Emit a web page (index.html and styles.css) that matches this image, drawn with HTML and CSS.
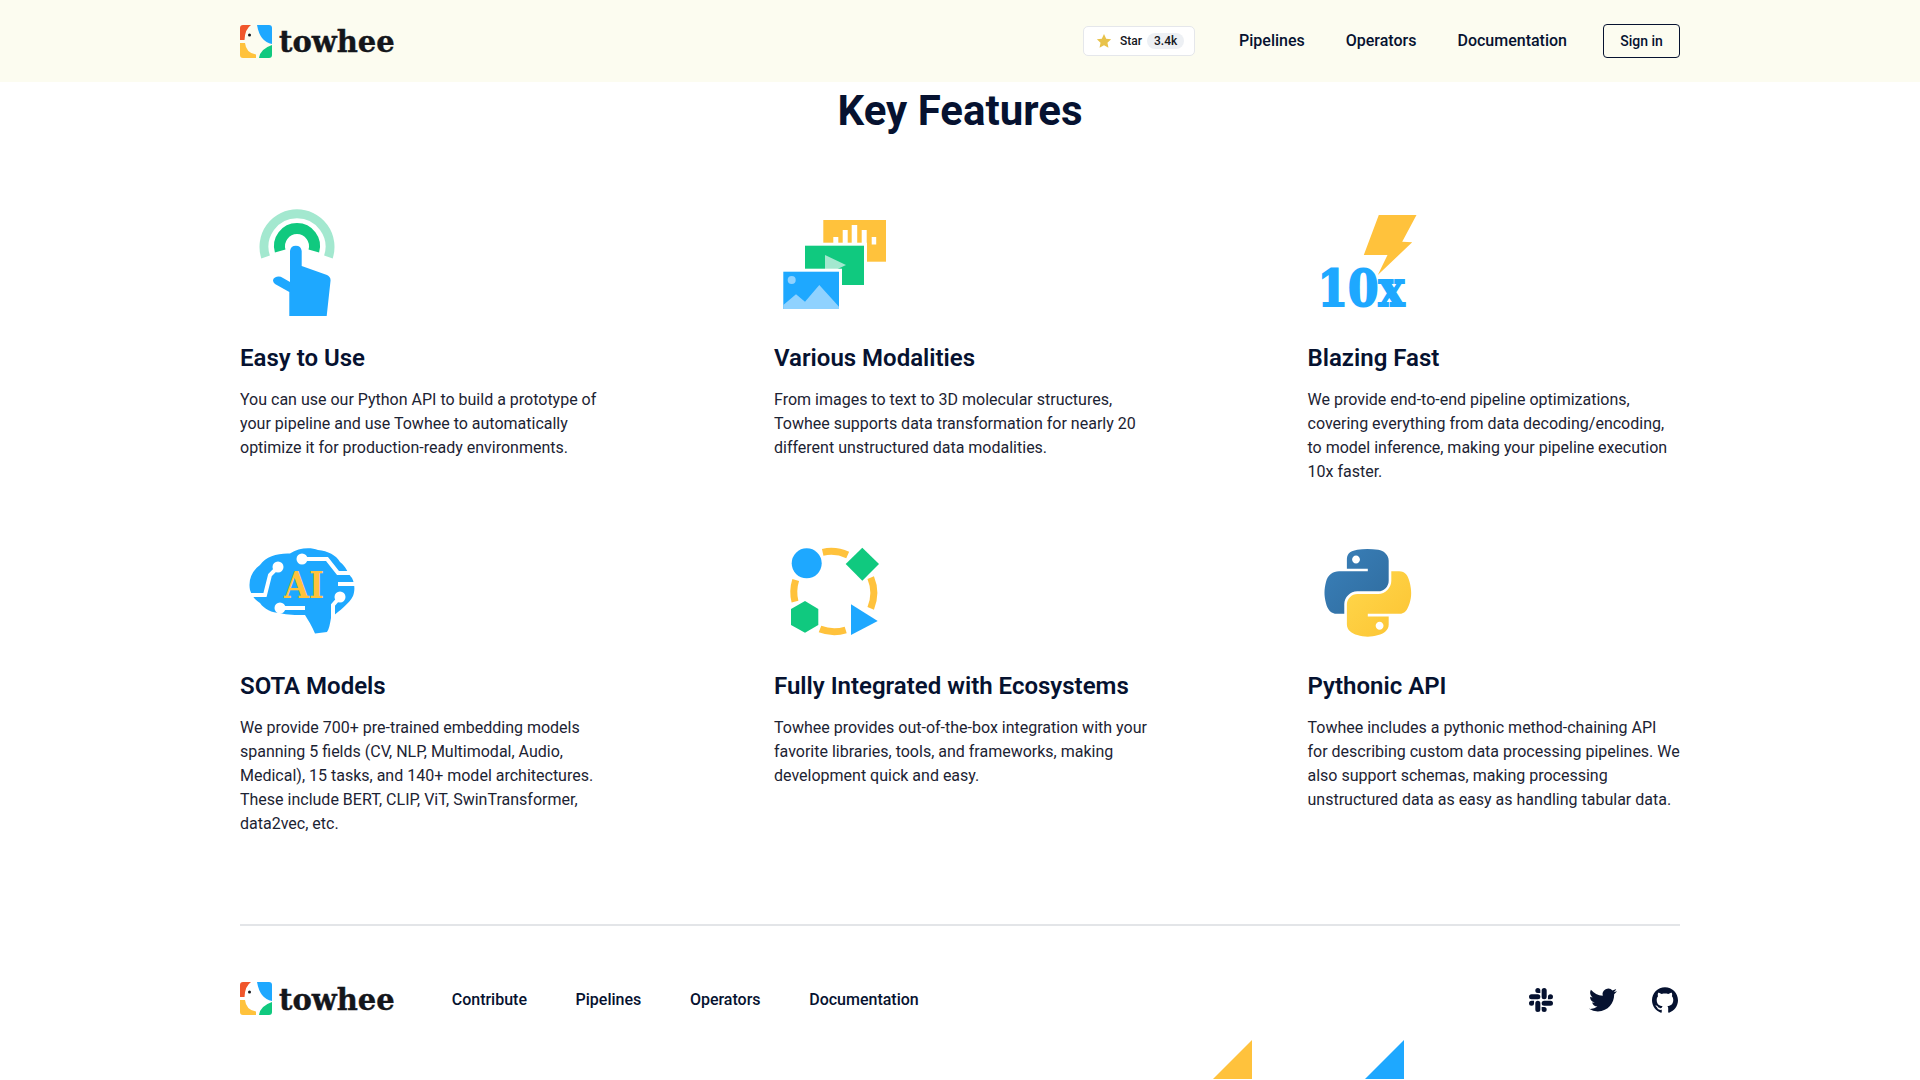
FILE: index.html
```html
<!DOCTYPE html>
<html lang="en">
<head>
<meta charset="utf-8">
<title>Towhee</title>
<link rel="stylesheet" href="styles.css">
</head>
<body>
<svg class="defs" width="0" height="0" aria-hidden="true">
  <defs>
    <g id="logo-mark">
      <path fill="#f0562b" d="M0 3Q0 0 3 0H11Q5 4 4.500 15H0Z"/>
      <path fill="#1ea8ff" d="M17 0H29Q32 0 32 3V19Q20 17 17 0Z"/>
      <path fill="#ffc23c" d="M0 18H5Q6 28 16 29.500V33H3Q0 33 0 30Z"/>
      <path fill="#10c97f" d="M32 20V30Q32 33 29 33H19Q20 24 32 20Z"/>
      <circle cx="9.500" cy="10" r="1.500" fill="#16181d"/>
    </g>
    <linearGradient id="py-blue" x1="0" y1="0" x2="1" y2="1">
      <stop offset="0" stop-color="#3a80ba"/><stop offset="1" stop-color="#2f6c9e"/>
    </linearGradient>
    <linearGradient id="py-yellow" x1="0" y1="0" x2="1" y2="1">
      <stop offset="0" stop-color="#ffd84c"/><stop offset="1" stop-color="#fcc332"/>
    </linearGradient>
  </defs>
</svg>

<header class="site-header">
  <div class="wrap header-row">
    <a class="logo" href="#">
      <svg class="logo-mark" viewBox="0 0 32 33"><use href="#logo-mark"/></svg>
      <span class="logo-text">towhee</span>
    </a>
    <nav class="top-nav">
      <a class="star-btn" href="#">
        <svg class="star-icon" viewBox="0 0 24 24"><path fill="#e8c24a" d="M12 1.500l3.300 7 7.400.9-5.500 5.100 1.500 7.500L12 18.300 5.300 22l1.500-7.500L1.300 9.400l7.400-.9z"/></svg>
        <span>Star</span>
        <span class="star-count">3.4k</span>
      </a>
      <a class="nav-link" href="#">Pipelines</a>
      <a class="nav-link" href="#">Operators</a>
      <a class="nav-link" href="#">Documentation</a>
      <a class="signin" href="#">Sign in</a>
    </nav>
  </div>
</header>

<main class="wrap features">
  <h1 class="features-title">Key Features</h1>
  <div class="feature-grid">

    <article class="feature">
      <svg class="feature-icon" viewBox="0 0 120 120">
        <path fill="none" stroke="#a3e8cf" stroke-width="9" d="M25.600 57A33 33 0 1 1 88.400 57"/>
        <path fill="none" stroke="#10c97f" stroke-width="11" d="M40.200 51A17.500 17.500 0 1 1 73.800 51"/>
        <path fill="#1ea8ff" d="M50 51A5.900 6 0 0 1 61.700 51V66L87 75Q91 77 90.500 81L86.700 116H49.300V92L35 84Q31 80 35 77.500Q39 75.500 43 78L50 82Z"/>
      </svg>
      <h2 class="feature-name">Easy to Use</h2>
      <p class="feature-text">You can use our Python API to build a prototype of your pipeline and use Towhee to automatically optimize it for production-ready environments.</p>
    </article>

    <article class="feature">
      <svg class="feature-icon" viewBox="0 0 120 120">
        <rect x="49.300" y="20" width="62.700" height="41.700" fill="#ffc23c"/>
        <g fill="#fff">
          <rect x="59.300" y="37" width="5" height="8"/>
          <rect x="68.700" y="30" width="5" height="15"/>
          <rect x="77.700" y="25" width="5.500" height="20"/>
          <rect x="87.700" y="30" width="5" height="15"/>
          <rect x="97.700" y="37" width="4.500" height="7.500"/>
        </g>
        <rect x="28" y="42.700" width="65" height="45" fill="#fff"/>
        <rect x="31" y="45.700" width="59" height="39.300" fill="#10c97f"/>
        <path fill="#a3e8cf" d="M51 55L72 65L51 75Z"/>
        <rect x="6.300" y="68.700" width="61.700" height="43" fill="#fff"/>
        <rect x="9.300" y="71.700" width="55.700" height="37.300" fill="#1ea8ff"/>
        <circle cx="17.700" cy="80" r="4" fill="#8fd2ff"/>
        <path fill="#8fd2ff" d="M9.300 105L22 94.300L31 101.700L45.300 85L65 106.700V109H9.300Z"/>
      </svg>
      <h2 class="feature-name">Various Modalities</h2>
      <p class="feature-text">From images to text to 3D molecular structures, Towhee supports data transformation for nearly 20 different unstructured data modalities.</p>
    </article>

    <article class="feature">
      <svg class="feature-icon" viewBox="-0.5 0 120 120">
        <path fill="#ffc23c" d="M70.300 15H108L93.700 41.700L103.700 42.300L69.300 75L79 55H55.300Z"/>
        <text class="icon-ten" x="9" y="106" textLength="87" lengthAdjust="spacingAndGlyphs">10x</text>
      </svg>
      <h2 class="feature-name">Blazing Fast</h2>
      <p class="feature-text">We provide end-to-end pipeline optimizations, covering everything from data decoding/encoding, to model inference, making your pipeline execution 10x faster.</p>
    </article>

    <article class="feature">
      <svg class="feature-icon" viewBox="0 -16 120 120">
        <path fill="#1ea8ff" d="M10 46C8 36 12 27 20 21C26 12 38 9 50 9.500C58 4 70 3 78 6C88 7 96 11 100 18C106 22 108 30 112 34C115 40 115 47 113 52C109 60 100 66 91 74C90 80 89 85 87 88L75 89.500C72 82 68 76 65 71C55 71 48 71 40 69C32 69 24 65 20 59C15 56 12 52 10 46Z"/>
        <g fill="none" stroke="#fff" stroke-width="4">
          <path d="M8 51H25L30 31L38 23"/>
          <path d="M62 15H87L98 29H116"/>
          <path d="M98 40H116"/>
          <path d="M100 53L93 61V74"/>
          <path d="M40 64H65"/>
        </g>
        <g fill="#fff">
          <circle cx="38" cy="23" r="5.500"/>
          <circle cx="62" cy="15" r="5.500"/>
          <circle cx="100" cy="53" r="5.500"/>
          <circle cx="40" cy="64" r="5.500"/>
        </g>
        <text class="icon-ai" x="44" y="54" textLength="40" lengthAdjust="spacingAndGlyphs">AI</text>
      </svg>
      <h2 class="feature-name">SOTA Models</h2>
      <p class="feature-text">We provide 700+ pre-trained embedding models spanning 5 fields (CV, NLP, Multimodal, Audio, Medical), 15 tasks, and 140+ model architectures. These include BERT, CLIP, ViT, SwinTransformer, data2vec, etc.</p>
    </article>

    <article class="feature">
      <svg class="feature-icon" viewBox="0 -16 120 120">
        <g fill="none" stroke="#ffc23c" stroke-width="7">
          <path d="M48.700 8.300A40 40 0 0 1 73.700 11"/>
          <path d="M96.700 33.700A40 40 0 0 1 96.700 64.300"/>
          <path d="M71.700 86A40 40 0 0 1 46 85"/>
          <path d="M21 57.700A40 40 0 0 1 21.700 36"/>
        </g>
        <circle cx="32.700" cy="19.300" r="15" fill="#1ea8ff"/>
        <path fill="#10c97f" d="M88.300 3.700L105 20L88.300 36.700L71.700 20Z"/>
        <path fill="#10c97f" d="M31 57L44.300 65V81L31 88.700L17 81V65Z"/>
        <path fill="#1ea8ff" d="M77 60.300L103.700 77L77 91Z"/>
      </svg>
      <h2 class="feature-name">Fully Integrated with Ecosystems</h2>
      <p class="feature-text">Towhee provides out-of-the-box integration with your favorite libraries, tools, and frameworks, making development quick and easy.</p>
    </article>

    <article class="feature">
      <svg class="feature-icon" viewBox="-0.5 -16 120 120">
        <g transform="translate(16 5) scale(.78)">
          <path fill="url(#py-blue)" d="M54.919 0C50.335.022 45.958.413 42.106 1.095 30.760 3.099 28.700 7.295 28.700 15.032V25.251H55.513V28.657H18.638C10.845 28.657 4.022 33.341 1.888 42.251-.574 52.464-.684 58.836 1.888 69.501 3.793 77.439 8.345 83.095 16.138 83.095H25.356V70.845C25.356 61.995 33.013 54.188 42.106 54.188H68.888C76.342 54.188 82.294 48.050 82.294 40.563V15.032C82.294 7.766 76.164 2.307 68.888 1.095 64.282.328 59.502 0 54.919 0ZM40.419 8.220C43.188 8.220 45.450 10.518 45.450 13.345 45.450 16.161 43.188 18.438 40.419 18.438 37.639 18.438 35.388 16.161 35.388 13.345 35.388 10.518 37.639 8.220 40.419 8.220Z"/>
          <path fill="url(#py-yellow)" d="M85.638 28.657V40.563C85.638 49.794 77.811 57.563 68.888 57.563H42.106C34.770 57.563 28.700 63.841 28.700 71.188V96.720C28.700 103.986 35.019 108.260 42.106 110.344 50.593 112.840 58.732 113.290 68.888 110.344 75.637 108.389 82.294 104.455 82.294 96.720V86.501H55.513V83.095H95.700C103.492 83.095 106.396 77.660 109.106 69.501 111.906 61.100 111.787 53.021 109.106 42.251 107.180 34.496 103.501 28.657 95.700 28.657ZM70.638 93.313C73.417 93.313 75.669 95.590 75.669 98.406 75.669 101.232 73.417 103.531 70.638 103.531 67.868 103.531 65.606 101.232 65.606 98.406 65.606 95.590 67.868 93.313 70.638 93.313Z"/>
        </g>
      </svg>
      <h2 class="feature-name">Pythonic API</h2>
      <p class="feature-text">Towhee includes a pythonic method-chaining API for describing custom data processing pipelines. We also support schemas, making processing unstructured data as easy as handling tabular data.</p>
    </article>

  </div>
</main>

<footer class="wrap site-footer">
  <div class="footer-row">
    <a class="logo" href="#">
      <svg class="logo-mark" viewBox="0 0 32 33"><use href="#logo-mark"/></svg>
      <span class="logo-text">towhee</span>
    </a>
    <nav class="footer-nav">
      <a class="nav-link" href="#">Contribute</a>
      <a class="nav-link" href="#">Pipelines</a>
      <a class="nav-link" href="#">Operators</a>
      <a class="nav-link" href="#">Documentation</a>
    </nav>
    <div class="socials">
      <a class="social" href="#"><svg class="social-icon slack-icon" viewBox="0 0 24 24"><path d="M5.042 15.165a2.528 2.528 0 0 1-2.520 2.523A2.528 2.528 0 0 1 0 15.165a2.527 2.527 0 0 1 2.522-2.520h2.520v2.520zM6.313 15.165a2.527 2.527 0 0 1 2.521-2.520 2.527 2.527 0 0 1 2.521 2.520v6.313A2.528 2.528 0 0 1 8.834 24a2.528 2.528 0 0 1-2.521-2.522v-6.313zM8.834 5.042a2.528 2.528 0 0 1-2.521-2.520A2.528 2.528 0 0 1 8.834 0a2.528 2.528 0 0 1 2.521 2.522v2.520H8.834zM8.834 6.313a2.528 2.528 0 0 1 2.521 2.521 2.528 2.528 0 0 1-2.521 2.521H2.522A2.528 2.528 0 0 1 0 8.834a2.528 2.528 0 0 1 2.522-2.521h6.312zM18.956 8.834a2.528 2.528 0 0 1 2.522-2.521A2.528 2.528 0 0 1 24 8.834a2.528 2.528 0 0 1-2.522 2.521h-2.522V8.834zM17.688 8.834a2.528 2.528 0 0 1-2.523 2.521 2.527 2.527 0 0 1-2.520-2.521V2.522A2.527 2.527 0 0 1 15.165 0a2.528 2.528 0 0 1 2.523 2.522v6.312zM15.165 18.956a2.528 2.528 0 0 1 2.523 2.522A2.528 2.528 0 0 1 15.165 24a2.527 2.527 0 0 1-2.520-2.522v-2.522h2.520zM15.165 17.688a2.527 2.527 0 0 1-2.520-2.523 2.526 2.526 0 0 1 2.520-2.520h6.313A2.527 2.527 0 0 1 24 15.165a2.528 2.528 0 0 1-2.522 2.523h-6.313z"/></svg></a>
      <a class="social" href="#"><svg class="social-icon twitter-icon" viewBox="0 0 24 24"><path d="M23.953 4.570a10 10 0 0 1-2.825.775 4.958 4.958 0 0 0 2.163-2.723c-.951.555-2.005.959-3.127 1.184a4.920 4.920 0 0 0-8.384 4.482C7.690 8.095 4.067 6.130 1.640 3.162a4.822 4.822 0 0 0-.666 2.475c0 1.710.870 3.213 2.188 4.096a4.904 4.904 0 0 1-2.228-.616v.060a4.923 4.923 0 0 0 3.946 4.827 4.996 4.996 0 0 1-2.212.085 4.936 4.936 0 0 0 4.604 3.417 9.867 9.867 0 0 1-6.102 2.105c-.390 0-.779-.023-1.170-.067a13.995 13.995 0 0 0 7.557 2.209c9.053 0 13.998-7.496 13.998-13.985 0-.210 0-.420-.015-.630A9.935 9.935 0 0 0 24 4.590z"/></svg></a>
      <a class="social" href="#"><svg class="social-icon" viewBox="0 0 24 24"><path d="M12 .297c-6.630 0-12 5.373-12 12 0 5.303 3.438 9.800 8.205 11.385.600.113.820-.258.820-.577 0-.285-.010-1.040-.015-2.040-3.338.724-4.042-1.610-4.042-1.610C4.422 18.070 3.633 17.700 3.633 17.700c-1.087-.744.084-.729.084-.729 1.205.084 1.838 1.236 1.838 1.236 1.070 1.835 2.809 1.305 3.495.998.108-.776.417-1.305.760-1.605-2.665-.300-5.466-1.332-5.466-5.930 0-1.310.465-2.380 1.235-3.220-.135-.303-.540-1.523.105-3.176 0 0 1.005-.322 3.300 1.230.960-.267 1.980-.399 3-.405 1.020.006 2.040.138 3 .405 2.280-1.552 3.285-1.230 3.285-1.230.645 1.653.240 2.873.120 3.176.765.840 1.230 1.910 1.230 3.220 0 4.610-2.805 5.625-5.475 5.920.420.360.810 1.096.810 2.220 0 1.606-.015 2.896-.015 3.286 0 .315.210.690.825.570C20.565 22.092 24 17.592 24 12.297c0-6.627-5.373-12-12-12"/></svg></a>
    </div>
  </div>
  <span class="corner corner-yellow"></span>
  <span class="corner corner-blue"></span>
</footer>
</body>
</html>
```

FILE: styles.css
```css
* {
  box-sizing: border-box;
}

html,
body {
  margin: 0;
  height: 1080px;
  overflow: hidden;
}

body {
  background: #fff;
  color: #061230;
  font-family: Roboto, "Liberation Sans", sans-serif;
  font-size: 16px;
  line-height: 24px;
}

a {
  color: inherit;
  text-decoration: none;
}

.defs {
  position: absolute;
}

.wrap {
  width: 1440px;
  margin-left: auto;
  margin-right: auto;
}

.site-header {
  height: 82px;
  background: #fcfcf0;
}

.header-row {
  height: 100%;
  display: flex;
  align-items: center;
  justify-content: space-between;
}

.logo {
  display: flex;
  align-items: center;
  gap: 7px;
}

.logo-mark {
  width: 32px;
  height: 33px;
  display: block;
}

.logo-text {
  padding-top: 3px;
  font-family: "DejaVu Serif", "Liberation Serif", serif;
  font-weight: 700;
  font-size: 29px;
  line-height: 33px;
  color: #14161b;
  -webkit-text-stroke: 0.4px #14161b;
}

.top-nav {
  display: flex;
  align-items: center;
  gap: 41px;
}

.nav-link {
  font-weight: 500;
  font-size: 16px;
  color: #061230;
}

.star-btn {
  display: flex;
  align-items: center;
  width: 112px;
  height: 30px;
  margin-right: 3px;
  padding-left: 12px;
  background: #fff;
  border: 1px solid #e5e7eb;
  border-radius: 5px;
  font-weight: 500;
  font-size: 12px;
  color: #14161b;
}

.star-icon {
  width: 16px;
  height: 16px;
  margin-right: 8px;
}

.star-count {
  margin-left: 5px;
  padding: 0 7px;
  height: 16px;
  line-height: 16px;
  background: #edf0f4;
  border-radius: 8px;
}

.signin {
  width: 77px;
  height: 34px;
  margin-left: -5px;
  display: flex;
  align-items: center;
  justify-content: center;
  border: 1px solid #061230;
  border-radius: 4px;
  font-weight: 500;
  font-size: 14px;
}

.features {
  padding-top: 5px;
}

.features-title {
  margin: 0 0 65px;
  text-align: center;
  font-weight: 700;
  font-size: 42px;
  line-height: 48px;
  color: #061230;
}

.feature-grid {
  display: grid;
  grid-template-columns: 373.500px 373px 372.600px;
  column-gap: 160.500px;
  row-gap: 44px;
}

.feature-icon {
  display: block;
  width: 120px;
  height: 120px;
  margin-bottom: 22px;
}

.feature-name {
  margin: 0 0 14px;
  font-weight: 600;
  font-size: 24px;
  line-height: 32px;
  color: #061230;
}

.feature-text {
  margin: 0;
  color: #1c2333;
}

.icon-ten {
  font-family: "DejaVu Serif", serif;
  font-weight: 700;
  font-size: 50px;
  fill: #1ea8ff;
  stroke: #1ea8ff;
  stroke-width: 2px;
}

.icon-ai {
  font-family: "DejaVu Serif", serif;
  font-weight: 700;
  font-size: 38px;
  fill: #ffc23c;
}

.site-footer {
  position: relative;
  margin-top: 88px;
  height: 155px;
  border-top: 2px solid #e3e5e8;
  overflow: hidden;
}

.footer-row {
  display: flex;
  align-items: center;
  height: 33px;
  margin-top: 57px;
}

.footer-row .logo {
  margin-top: -2px;
}

.footer-nav {
  display: flex;
  gap: 48.600px;
  margin-left: 57px;
}

.socials {
  display: flex;
  gap: 30px;
  margin-left: auto;
  margin-right: -1px;
}

.social {
  display: flex;
  align-items: center;
  justify-content: center;
  width: 32px;
  height: 32px;
}

.social-icon {
  width: 26px;
  height: 26px;
  fill: #061230;
}

.slack-icon {
  width: 24px;
  height: 24px;
}

.twitter-icon {
  width: 28px;
  height: 28px;
}

.corner {
  position: absolute;
  top: 114px;
  width: 120px;
  height: 120px;
  clip-path: polygon(100% 0, 100% 100%, 0 100%);
}

.corner-yellow {
  left: 892px;
  background: #ffc23c;
}

.corner-blue {
  left: 1044px;
  background: #1ea8ff;
}
```
